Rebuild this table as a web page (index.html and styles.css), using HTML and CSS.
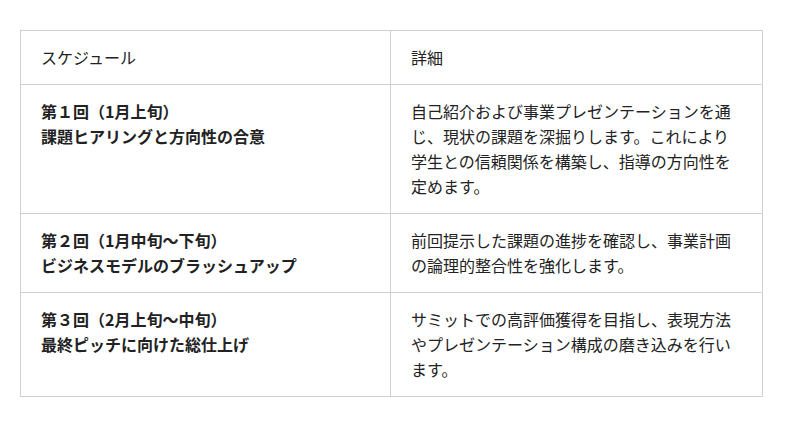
FILE: index.html
```html
<!DOCTYPE html>
<html lang="ja">
<head>
<meta charset="utf-8">
<link rel="stylesheet" href="styles.css">
</head>
<body>
<table class="schedule">
  <thead>
    <tr><th class="col-a">スケジュール</th><th class="col-b">詳細</th></tr>
  </thead>
  <tbody>
    <tr>
      <td class="title">第１回（1月上旬）<br>課題ヒアリングと方向性の合意</td>
      <td>自己紹介および事業プレゼンテーションを通じ、現状の課題を深掘りします。これにより学生との信頼関係を構築し、指導の方向性を定めます。</td>
    </tr>
    <tr>
      <td class="title">第２回（1月中旬～下旬）<br>ビジネスモデルのブラッシュアップ</td>
      <td>前回提示した課題の進捗を確認し、事業計画の論理的整合性を強化します。</td>
    </tr>
    <tr>
      <td class="title">第３回（2月上旬～中旬）<br>最終ピッチに向けた総仕上げ</td>
      <td>サミットでの高評価獲得を目指し、表現方法やプレゼンテーション構成の磨き込みを行います。</td>
    </tr>
  </tbody>
</table>
</body>
</html>
```
FILE: styles.css
```css
html, body {
  margin: 0;
  padding: 0;
  background: #fff;
}
body {
  padding: 30px 20px;
  font-family: "Noto Sans CJK JP", "Noto Sans", sans-serif;
  color: #222;
  font-size: 16px;
  line-height: 25px;
}
.schedule {
  width: 742px;
  border-collapse: collapse;
  table-layout: fixed;
}
.schedule th,
.schedule td {
  border: 1px solid #d0d0d0;
  padding: 14px 20px;
  text-align: left;
  vertical-align: top;
  font-weight: normal;
}
.col-a { width: 329px; }
.col-b { width: 331px; }
.schedule td.title {
  font-weight: bold;
}
```
